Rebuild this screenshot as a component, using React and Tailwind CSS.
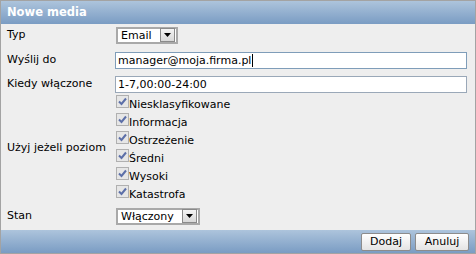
import React from "react";

const font = { fontFamily: '"DejaVu Sans", Verdana, sans-serif' };

function Arrow() {
  return (
    <div className="flex h-[14px] w-[15px] items-center justify-center border border-[#8a8a8a] bg-gradient-to-b from-[#f4f4f4] to-[#d8d8d8]">
      <svg width="7" height="4" viewBox="0 0 7 4">
        <polygon points="0,0 7,0 3.5,4" fill="#000" />
      </svg>
    </div>
  );
}

function Select({ value, w }) {
  return (
    <div className={`flex h-[17px] ${w} items-center justify-between border-2 border-[#a9a9a9] bg-white pl-[3px] pr-[1px]`}>
      <span className="leading-none">{value}</span>
      <Arrow />
    </div>
  );
}

function Check({ label }) {
  return (
    <div className="flex h-[18px] items-start">
      <div className="mt-[1px] flex h-[13px] w-[13px] shrink-0 items-center justify-center border border-[#b0b0b0] bg-[#e6e6e6]">
        <svg width="9" height="9" viewBox="0 0 9 9">
          <path d="M1 4.5 L3.5 7 L8 1.5" stroke="#5c6fa8" strokeWidth="2" fill="none" />
        </svg>
      </div>
      <span className="mt-[5px] leading-none">{label}</span>
    </div>
  );
}

export default function App() {
  return (
    <div style={font} className="flex h-[254px] w-[476px] flex-col border border-[#a3a3a3] bg-[#eeeeee] text-[11px] text-black">
      <div className="flex h-[24px] items-center bg-gradient-to-b from-[#adc4dc] to-[#7a9cc3] pl-[6px] text-[11.5px] font-bold text-white">
        Nowe media
      </div>
      <div className="flex flex-1 flex-col">
        <div className="flex h-[22px] items-center">
          <div className="w-[115px] pl-[6px]">Typ</div>
          <Select value="Email" w="w-[62px]" />
        </div>
        <div className="flex h-[28px] items-center">
          <div className="w-[114px] pl-[6px]">Wyślij do</div>
          <div className="flex h-[17px] w-[352px] items-center border border-[#7f9db9] bg-white pl-[2px]">
            <span className="leading-none">manager@moja.firma.pl</span>
            <span className="ml-[1px] h-[13px] w-[1px] bg-black" />
          </div>
        </div>
        <div className="flex h-[20px] items-center">
          <div className="w-[114px] pl-[6px]">Kiedy włączone</div>
          <div className="flex h-[17px] w-[352px] items-center border border-[#9aa8b8] bg-white pl-[2px]">
            <span className="leading-none">1-7,00:00-24:00</span>
          </div>
        </div>
        <div className="flex items-center">
          <div className="w-[115px] pl-[6px]">Użyj jeżeli poziom</div>
          <div className="flex flex-col">
            <Check label="Niesklasyfikowane" />
            <Check label="Informacja" />
            <Check label="Ostrzeżenie" />
            <Check label="Średni" />
            <Check label="Wysoki" />
            <Check label="Katastrofa" />
          </div>
        </div>
        <div className="flex h-[28px] items-center">
          <div className="w-[115px] pl-[6px]">Stan</div>
          <Select value="Włączony" w="w-[84px]" />
        </div>
      </div>
      <div className="flex h-[24px] items-center justify-end gap-[4px] bg-gradient-to-b from-[#adc4dc] to-[#7a9cc3] pr-[6px]">
        <button className="h-[18px] w-[50px] rounded-[2px] border border-[#8c8c8c] bg-gradient-to-b from-[#ffffff] to-[#e4e4e4] leading-none text-black">
          Dodaj
        </button>
        <button className="h-[18px] w-[54px] rounded-[2px] border border-[#8c8c8c] bg-gradient-to-b from-[#ffffff] to-[#e4e4e4] leading-none text-black">
          Anuluj
        </button>
      </div>
    </div>
  );
}
